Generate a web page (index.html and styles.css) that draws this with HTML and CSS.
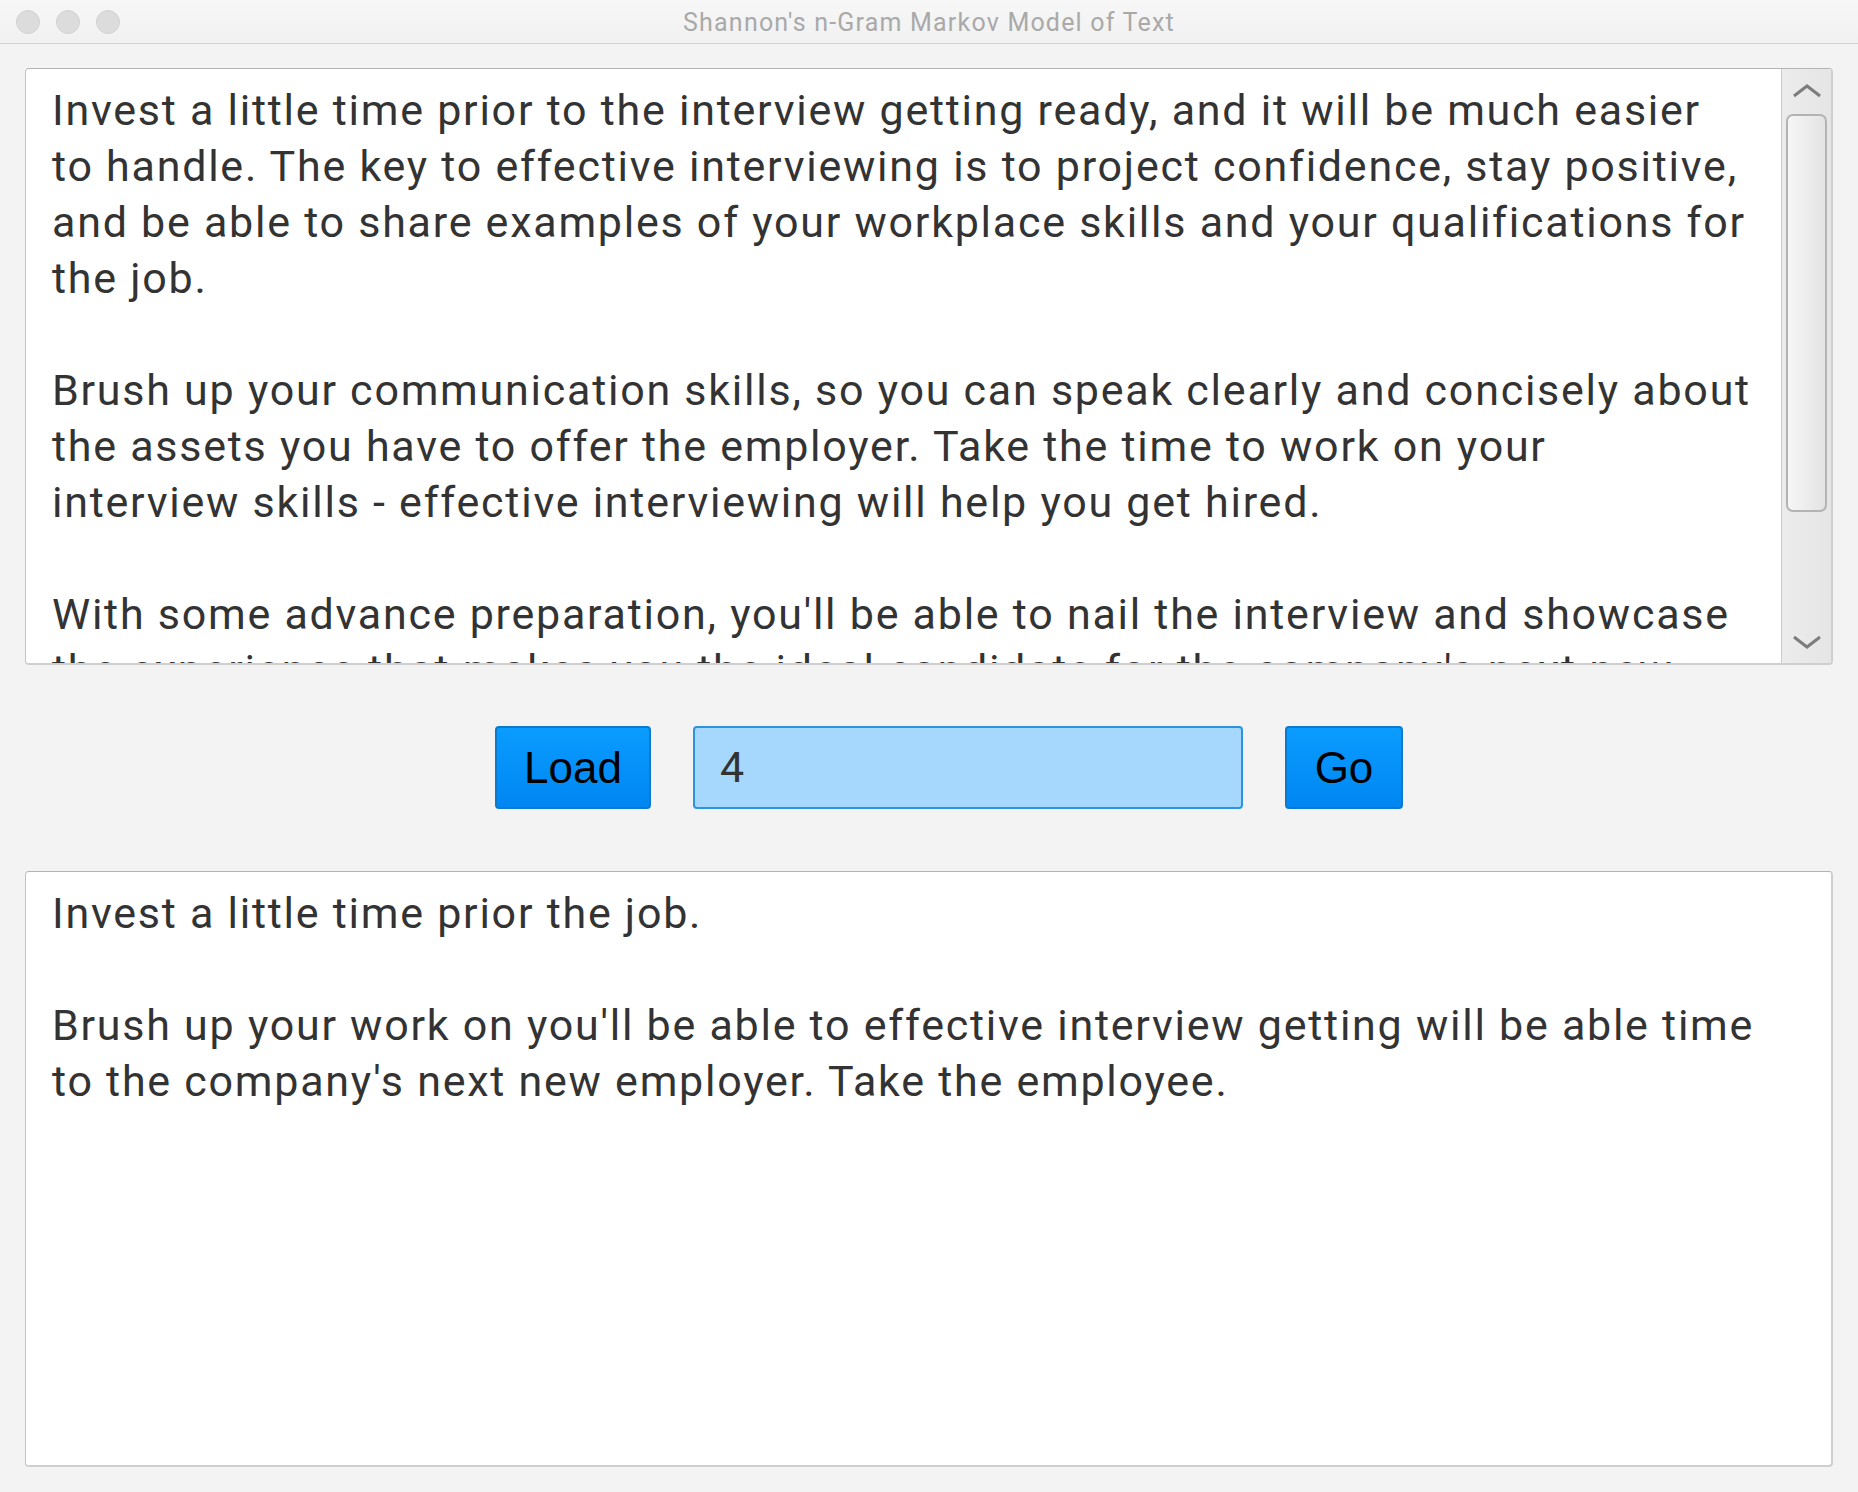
FILE: index.html
```html
<!DOCTYPE html>
<html>
<head>
<meta charset="utf-8">
<title>Shannon's n-Gram Markov Model of Text</title>
<link rel="stylesheet" href="styles.css">
</head>
<body>
<div class="window">
  <div class="titlebar">
    <div class="lights">
      <span class="light"></span>
      <span class="light"></span>
      <span class="light"></span>
    </div>
    <div class="title">Shannon's n-Gram Markov Model of Text</div>
  </div>
  <div class="content">
    <div class="textarea source">
      <div class="text">
        <div class="line">Invest a little time prior to the interview getting ready, and it will be much easier</div>
        <div class="line">to handle. The key to effective interviewing is to project confidence, stay positive,</div>
        <div class="line">and be able to share examples of your workplace skills and your qualifications for</div>
        <div class="line">the job.</div>
        <div class="line">&nbsp;</div>
        <div class="line">Brush up your communication skills, so you can speak clearly and concisely about</div>
        <div class="line">the assets you have to offer the employer. Take the time to work on your</div>
        <div class="line">interview skills - effective interviewing will help you get hired.</div>
        <div class="line">&nbsp;</div>
        <div class="line">With some advance preparation, you'll be able to nail the interview and showcase</div>
        <div class="line">the experience that makes you the ideal candidate for the company's next new</div>
      </div>
      <div class="scrollbar">
        <div class="arrow up">
          <svg width="30" height="14" viewBox="0 0 30 14"><polyline points="2,12 15,2 28,12" fill="none" stroke="#7d7d7d" stroke-width="3"/></svg>
        </div>
        <div class="track"><div class="thumb"></div></div>
        <div class="arrow down">
          <svg width="30" height="14" viewBox="0 0 30 14"><polyline points="2,2 15,12 28,2" fill="none" stroke="#7d7d7d" stroke-width="3"/></svg>
        </div>
      </div>
    </div>
    <div class="controls">
      <button class="btn load">Load</button>
      <div class="field">4</div>
      <button class="btn go">Go</button>
    </div>
    <div class="textarea output">
      <div class="text">
        <div class="line">Invest a little time prior the job.</div>
        <div class="line">&nbsp;</div>
        <div class="line">Brush up your work on you'll be able to effective interview getting will be able time</div>
        <div class="line">to the company's next new employer. Take the employee.</div>
      </div>
    </div>
  </div>
</div>
</body>
</html>
```
FILE: styles.css
```css
html, body {
  margin: 0;
  padding: 0;
  background: #f3f3f3;
}
.window {
  width: 1858px;
  height: 1492px;
  display: flex;
  flex-direction: column;
  background: #f3f3f3;
  overflow: hidden;
}
.titlebar {
  height: 43px;
  border-bottom: 1px solid #d2d2d2;
  background: linear-gradient(#f7f7f7, #f1f1f1);
  display: flex;
  align-items: center;
  position: relative;
}
.lights {
  display: flex;
  gap: 16px;
  padding-left: 16px;
}
.light {
  width: 22px;
  height: 22px;
  border-radius: 50%;
  background: #dcdcdc;
  border: 1px solid #d2d2d2;
}
.title {
  position: absolute;
  left: 0;
  right: 0;
  top: 3px;
  height: 40px;
  line-height: 40px;
  text-align: center;
  font-family: Roboto, "Helvetica Neue", sans-serif;
  font-size: 25px;
  letter-spacing: 1.2px;
  color: #a9a9a9;
}
.content {
  flex: 1;
  display: flex;
  flex-direction: column;
  padding: 24px 25px 25px 25px;
}
.textarea {
  background: #fff;
  border: 1px solid #c2c2c2;
  border-top-color: #b4b4b4;
  border-bottom: 2px solid #cfcfcf;
  border-right: 2px solid #cfcfcf;
  border-radius: 4px;
  box-sizing: border-box;
  height: 597px;
  display: flex;
  overflow: hidden;
  font-family: Roboto, "Helvetica Neue", sans-serif;
  font-size: 43px;
  letter-spacing: 1.75px;
  color: #333333;
}
.output {
  height: 596px;
}
.text {
  flex: 1;
  padding: 13px 0 0 26px;
  overflow: hidden;
}
.line {
  white-space: pre;
  height: 56px;
  line-height: 56px;
}
.scrollbar {
  width: 49px;
  border-left: 1px solid #cdcdcd;
  background: linear-gradient(90deg, #ececec, #e5e5e5);
  display: flex;
  flex-direction: column;
}
.arrow {
  display: flex;
  justify-content: center;
}
.arrow.up {
  align-items: flex-start;
  height: 45px;
}
.arrow.up svg {
  margin-top: 15px;
}
.arrow.down {
  align-items: flex-end;
  height: 60px;
}
.arrow.down svg {
  margin-bottom: 14px;
}
.track {
  flex: 1;
  display: flex;
  flex-direction: column;
  padding: 0 4px;
}
.thumb {
  height: 398px;
  border: 2px solid #b3b3b3;
  border-radius: 7px;
  background: linear-gradient(90deg, #f6f6f6, #e3e3e3);
  box-sizing: border-box;
}
.controls {
  display: flex;
  justify-content: center;
  gap: 42px;
  margin: 61px 0 62px 0;
  padding-left: 40px;
  height: 83px;
}
.btn {
  height: 83px;
  border: 2px solid #0b79cc;
  border-radius: 4px;
  background: linear-gradient(#0a9cff, #0086f2);
  font-family: "Liberation Sans", Arial, sans-serif;
  font-size: 44px;
  color: #000;
  padding: 0;
  margin: 0;
  box-sizing: border-box;
}
.load {
  width: 156px;
}
.go {
  width: 118px;
}
.field {
  width: 550px;
  height: 83px;
  box-sizing: border-box;
  border: 2px solid #2a95de;
  border-radius: 4px;
  background: #a6d8fd;
  font-family: Roboto, "Helvetica Neue", sans-serif;
  font-size: 43px;
  color: #333;
  line-height: 79px;
  padding-left: 25px;
}
```
